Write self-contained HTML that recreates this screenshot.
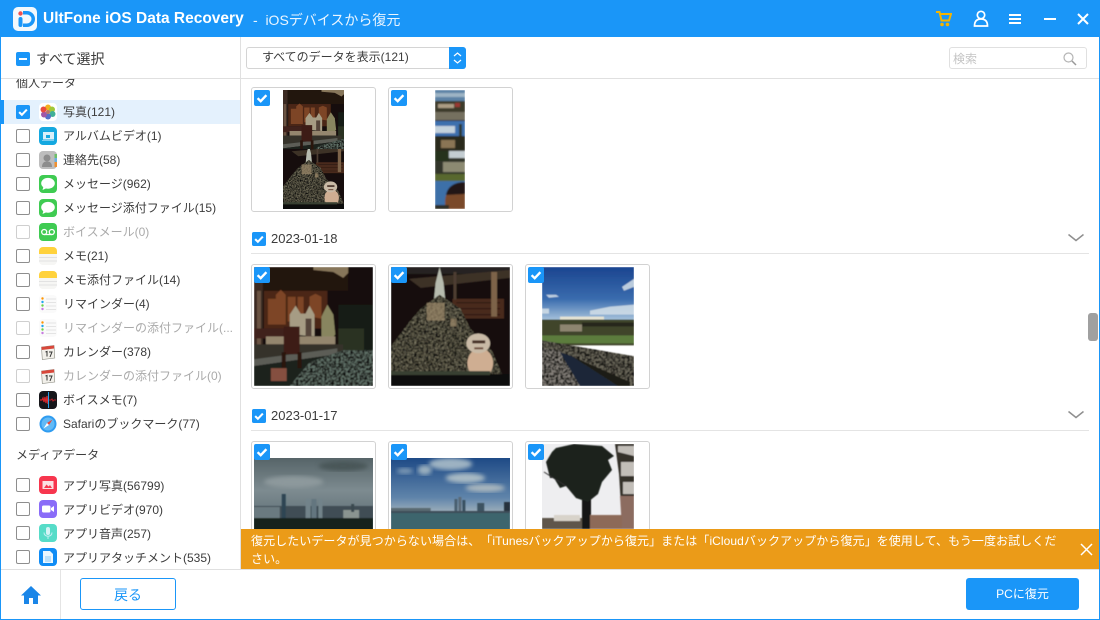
<!DOCTYPE html>
<html><head><meta charset="utf-8"><style>
*{box-sizing:border-box}
html,body{margin:0;padding:0}
body{width:1100px;height:620px;position:relative;overflow:hidden;background:#fff;font-family:"Liberation Sans","Noto Sans CJK JP",sans-serif;color:#3c3c3c;text-spacing-trim:space-all}
.a{position:absolute}
.t{position:absolute;white-space:nowrap;font-size:12px;line-height:20px;height:20px}
.cb{position:absolute;left:16px;width:14px;height:14px;border:1px solid #8e8e8e;border-radius:2px;background:#fff}
.cb.d{border-color:#cfcfcf}
.ic{position:absolute;left:39px;width:18px;height:18px}
.card{position:absolute;width:125px;height:125px;border:1px solid #d2d2d2;border-radius:3px;background:#fff;overflow:hidden}
.card svg.p{position:absolute;left:2px;top:2px}
.ck{position:absolute;left:2px;top:2px;width:16px;height:16px}
.g{color:#aaa}
</style></head><body>
<svg width="0" height="0" style="position:absolute"><defs>
<filter id="b" x="-5%" y="-5%" width="110%" height="110%"><feGaussianBlur stdDeviation=".45"/></filter>
<filter id="b3" x="-5%" y="-5%" width="110%" height="110%"><feGaussianBlur stdDeviation=".8"/></filter>
<filter id="b2" x="-10%" y="-10%" width="120%" height="120%"><feGaussianBlur stdDeviation="2.2"/></filter>
<filter id="n" x="0" y="0" width="100%" height="100%" color-interpolation-filters="sRGB"><feTurbulence type="fractalNoise" baseFrequency=".42" numOctaves="2" seed="4"/><feColorMatrix type="matrix" values="0 0 0 0 .06  0 0 0 0 .06  0 0 0 0 .05  3 0 0 0 -1.1"/><feComposite in2="SourceAlpha" operator="in"/></filter>
<filter id="nl" x="0" y="0" width="100%" height="100%" color-interpolation-filters="sRGB"><feTurbulence type="fractalNoise" baseFrequency=".5" numOctaves="2" seed="9"/><feColorMatrix type="matrix" values="0 0 0 0 .68  0 0 0 0 .66  0 0 0 0 .56  7 0 0 0 -4"/><feComposite in2="SourceAlpha" operator="in"/></filter>
<linearGradient id="sk" x1="0" y1="0" x2="0" y2="1"><stop offset="0" stop-color="#1b4590"/><stop offset=".6" stop-color="#3a6cae"/><stop offset="1" stop-color="#a9c4dc"/></linearGradient>
<linearGradient id="gy" x1="0" y1="0" x2="0" y2="1"><stop offset="0" stop-color="#566468"/><stop offset=".45" stop-color="#7d8b90"/><stop offset="1" stop-color="#55676e"/></linearGradient>
<linearGradient id="bl" x1="0" y1="0" x2="0" y2="1"><stop offset="0" stop-color="#1e4a86"/><stop offset=".55" stop-color="#5f84aa"/><stop offset=".76" stop-color="#9fb0bb"/></linearGradient>
<symbol id="A" viewBox="0 0 120 120" preserveAspectRatio="none"><g filter="url(#b)">
<rect width="120" height="120" fill="#130c09"/>
<rect width="95" height="24" fill="#21120c"/><path d="M60 0H95V6L90 11 80 5 60 3z" fill="#87765a"/>
<rect x="10" y="24" width="64" height="38" fill="#4c2615"/>
<path d="M14 58V32h8v26zM22 58V28l5-5 5 5v30zM34 55V30h8v25zM44 52V30h6v22zM56 50V30l6-3 6 3v22z" fill="#7d4526"/>
<rect x="0" y="0" width="9" height="92" fill="#3a2a22"/><rect x="3" y="24" width="4" height="60" fill="#6a5342"/>
<path d="M36 68V48l6-9 5 8 5 0 4-8 5 9v22z" fill="#a69c84"/><path d="M68 70V50l6-12 6 10 2 20-3 4z" fill="#88855f"/>
<rect x="52" y="52" width="6" height="20" fill="#54443a"/>
<rect x="0" y="62" width="36" height="10" fill="#40201c"/><rect x="12" y="70" width="70" height="8" fill="#94866e"/>
<rect x="85" y="38" width="35" height="48" fill="#121a13"/><rect x="85" y="62" width="26" height="22" fill="#2b3322"/>
<path d="M0 78H90V86L0 96z" fill="#34332c"/><path d="M0 93L84 82V88L0 100z" fill="#5b5d56"/>
<path d="M0 100L84 88V120H0z" fill="#1d211f"/>
<path d="M36 120L56 96 90 84H120V120z" fill="#5f6f66"/><path d="M36 120L56 96 90 84H120V120z" fill="#000" filter="url(#n)"/>
<path d="M30 60h16v28H30z" fill="#3c1c14"/><rect x="28" y="86" width="4" height="16" fill="#2a120d"/><rect x="44" y="86" width="4" height="16" fill="#2a120d"/>
<rect x="17" y="102" width="16" height="13" fill="#85503f"/>
</g></symbol>
<symbol id="B" viewBox="0 0 120 120" preserveAspectRatio="none"><g filter="url(#b)">
<rect width="120" height="120" fill="#130d0a"/>
<rect width="120" height="7" fill="#262321"/><path d="M18 12L120 3V11L30 21z" fill="#3d3128"/>
<rect x="62" y="32" width="52" height="20" fill="#4a2a1c"/><path d="M66 36h44M66 42h44M66 48h44" stroke="#2a170f"/><rect x="101" y="5" width="6" height="45" fill="#7d6448"/><rect x="63" y="5" width="3" height="28" fill="#4e3e32"/>
<path d="M45 16L49 0 53 16 55 36H43z" fill="#b7bbae"/>
<path d="M49 28L70 42 80 62 102 85 112 108H0V80L18 56 30 42z" fill="#5c5846"/>
<path d="M49 28L70 42 80 62 102 85 112 108H0V80L18 56 30 42z" fill="#000" filter="url(#n)"/>
<path d="M49 28L70 42 80 62 102 85 112 108H0V80L18 56 30 42z" fill="#000" filter="url(#nl)" opacity=".45"/>
<path d="M36 36h18v18H36zM60 52h6v8h-6z" fill="#a08c6c" opacity=".7"/>
<ellipse cx="90" cy="97" rx="13" ry="15" fill="#cfae92"/><ellipse cx="88" cy="77" rx="12" ry="10" fill="#c9baa6"/><rect x="82" y="74" width="13" height="3" fill="#463028"/><rect x="84" y="81" width="9" height="2" fill="#6e5040"/>
<rect y="108" width="120" height="12" fill="#0f0c0a"/><rect x="0" y="105" width="100" height="4" fill="#384030"/>
</g></symbol>
<symbol id="C" viewBox="0 0 92 120" preserveAspectRatio="none"><g filter="url(#b)">
<rect width="92" height="54" fill="url(#sk)"/><path d="M80 20l12-8v8l-10 4zM4 28h10l3 2-10 1zM0 42h7v5H0zM48 44l20-4 24-2v10H48z" fill="#d4dfe8" opacity=".85"/><path d="M18 50h44v3H18z" fill="#e6e4d4"/>
<rect y="53" width="92" height="26" fill="#3f452c"/><rect x="18" y="58" width="22" height="7" fill="#8d8570"/><rect x="0" y="69" width="92" height="8" fill="#5b7c3c"/><path d="M40 56H92V60H40z" fill="#26281e"/>
<path d="M0 74L92 90V120H0z" fill="#6b675a"/><path d="M0 74L92 90V120H0z" fill="#000" filter="url(#n)"/>
<path d="M0 82L18 84 38 120H0z" fill="#85807a"/><path d="M0 82L18 84 38 120H0z" fill="#000" filter="url(#n)"/>
<path d="M18 86L30 90 76 120H38z" fill="#1a2738"/><path d="M30 90L88 116V120H76z" fill="#1f1a12"/>
</g></symbol>
<symbol id="D" viewBox="0 0 120 72" preserveAspectRatio="none">
<rect width="120" height="72" fill="url(#gy)"/><ellipse cx="90" cy="8" rx="25" ry="5" fill="#4a5658" filter="url(#b2)"/><ellipse cx="40" cy="24" rx="30" ry="6" fill="#8d999c" filter="url(#b2)"/>
<g filter="url(#b)"><rect y="48" width="120" height="14" fill="#3f4e54"/><rect x="28" y="36" width="4" height="24" fill="#2f4552"/><rect x="52" y="41" width="5" height="20" fill="#72838a"/><rect x="58" y="41" width="5" height="20" fill="#63767f"/><rect x="65" y="41" width="4" height="20" fill="#72838a"/><rect x="0" y="49" width="26" height="12" fill="#6a7a80"/><rect x="90" y="52" width="16" height="9" fill="#8a9490"/><rect x="98" y="46" width="3" height="8" fill="#3b4a50"/>
<rect y="60" width="120" height="12" fill="#16211c"/></g>
</symbol>
<symbol id="E" viewBox="0 0 120 72" preserveAspectRatio="none">
<rect width="120" height="72" fill="url(#bl)"/><ellipse cx="60" cy="6" rx="22" ry="6" fill="#9db2c2" filter="url(#b2)"/><ellipse cx="34" cy="12" rx="7" ry="5" fill="#98aebe" filter="url(#b2)"/><ellipse cx="75" cy="20" rx="20" ry="5" fill="#a8bac4" filter="url(#b2)"/><ellipse cx="95" cy="30" rx="20" ry="4" fill="#a8b6be" filter="url(#b2)"/><ellipse cx="14" cy="13" rx="8" ry="3" fill="#7c98b4" filter="url(#b2)"/>
<g filter="url(#b)"><rect x="64" y="41" width="3" height="14" fill="#4a5f70"/><rect x="68" y="39" width="3" height="16" fill="#5a6b78"/><rect x="72" y="42" width="3" height="13" fill="#384f60"/><rect x="87" y="45" width="7" height="10" fill="#3e5262"/><rect x="114" y="44" width="6" height="11" fill="#26323c"/><rect y="50" width="40" height="5" fill="#5a6a72"/><rect y="53" width="120" height="3" fill="#3e4e58"/><rect y="55" width="120" height="17" fill="#3c656d"/></g>
</symbol>
<symbol id="F" viewBox="0 0 92 85" preserveAspectRatio="none">
<rect width="92" height="85" fill="#eeeef0"/><g filter="url(#b)">
<path d="M73 0H92V62H79L77 30z" fill="#35302b"/><path d="M76 2H92V12L76 8zM79 18H92V32H79zM81 38H92V50H81z" fill="#c2beb8"/><path d="M78 52H92V85H80z" fill="#8c6c60"/>
<rect x="40" y="50" width="9" height="35" fill="#161612"/>
<path d="M4 18L10 8 14 4 32 0 60 2 72 12 66 16 70 26 60 38 56 50 46 58 34 54 24 42 18 44 12 34 8 34z" fill="#1b211c"/>
<path d="M2 28L24 42" stroke="#333" fill="none"/>
<path d="M0 74H40V85H0z" fill="#5e564c"/><path d="M12 71H38V77H12z" fill="#d8d3ca"/><path d="M48 71H80V85H48z" fill="#8d6a58"/>
</g></symbol>
<symbol id="S" viewBox="0 0 30 119" preserveAspectRatio="none"><g filter="url(#b3)">
<rect width="30" height="119" fill="#333"/>
<rect width="30" height="11" fill="#5c82a6"/><rect y="3" width="30" height="4" fill="#9cb4c4"/><rect y="11" width="30" height="19" fill="#3c3a2a"/><rect x="3" y="14" width="16" height="4" fill="#ac9c84"/><rect x="20" y="13" width="5" height="4" fill="#9a3830"/><rect y="22" width="30" height="8" fill="#75705e"/>
<rect y="31" width="30" height="15" fill="#3d70ae"/><rect y="36" width="20" height="7" fill="#c4d2dc"/><rect x="24" y="34" width="3" height="20" fill="#2f3a32"/><rect y="46" width="30" height="15" fill="#2b2a1e"/><rect x="6" y="50" width="14" height="8" fill="#8a7454"/>
<rect y="61" width="30" height="30" fill="#30362a"/><rect x="0" y="61" width="14" height="10" fill="#26301f"/><rect x="14" y="61" width="16" height="7" fill="#c4cdd2"/><rect x="8" y="72" width="22" height="10" fill="#8c8a72"/><rect y="84" width="30" height="7" fill="#59672f"/>
<rect y="91" width="30" height="28" fill="#3d70a8"/><path d="M30 92C18 92 10 100 10 112V119H30z" fill="#7a4a2a"/><path d="M30 92C18 92 12 98 11 105L30 104z" fill="#241612"/><rect y="115" width="14" height="4" fill="#2e2e26"/>
</g></symbol>
<symbol id="ck" viewBox="0 0 16 16"><rect width="16" height="16" rx="2" fill="#1a96f8"/><path d="M3.6 8.2L6.7 11.2 12.4 5.2" fill="none" stroke="#fff" stroke-width="2.4"/></symbol>
<symbol id="note" viewBox="0 0 18 18"><rect width="18" height="18" rx="4" fill="#f6f6f4"/><path d="M0 4a4 4 0 0 1 4-4h10a4 4 0 0 1 4 4v3H0z" fill="#ffd23c"/><path d="M0 10.500h18M0 14h18" stroke="#e2e2e2"/></symbol>
<symbol id="msg" viewBox="0 0 18 18"><rect width="18" height="18" rx="4" fill="#3fcb52"/><ellipse cx="9" cy="8.300" rx="6.800" ry="5.400" fill="#fff"/><path d="M4.500 11.500L3.500 15 8 13z" fill="#fff"/></symbol>
<symbol id="rem" viewBox="0 0 18 18"><rect width="18" height="18" rx="4" fill="#fafafa"/><path d="M7 4h10M7 7.500h10M7 11h10M7 14.500h10" stroke="#e4e4e4"/><circle cx="3.500" cy="3.500" r="1.200" fill="#ff9500"/><circle cx="3.500" cy="7" r="1.200" fill="#20a6f0"/><circle cx="3.500" cy="10.500" r="1.200" fill="#6cd24c"/><circle cx="3.500" cy="14" r="1.200" fill="#c77be0"/></symbol>
<symbol id="cal" viewBox="0 0 18 18"><rect width="18" height="18" rx="3" fill="#fff"/><path d="M2.500 4l12.500-1.500 .8 12.500-12.500 1.500z" fill="#f2f0ea" stroke="#8a8a80" stroke-width=".6"/><path d="M2.500 4l12.500-1.500 .2 3-12.500 1.500z" fill="#d8473a"/><path d="M6.500 9l1.500-.5v5M10 9h3l-2 5" fill="none" stroke="#333" stroke-width="1"/></symbol>
</defs></svg>

<!-- header -->
<div class="a" style="left:0;top:0;width:1100px;height:37px;background:#1a96f8"></div>
<svg class="a" style="left:13px;top:7px" width="24" height="24" viewBox="0 0 24 24"><rect width="24" height="24" rx="5" fill="#f2f8fd"/><path d="M10 4h4a8 8 0 0 1 0 16h-4v-3.500h4a4.500 4.500 0 0 0 0-9h-4z" fill="#1a96f8"/><rect x="5.500" y="10" width="4" height="10" rx="2" fill="#1a96f8"/><circle cx="7.500" cy="6.500" r="2.200" fill="#ee4f4f"/></svg>
<div class="t" style="left:43px;top:9px;color:#fff;font-size:15.500px;font-weight:bold">UltFone iOS Data Recovery</div>
<div class="t" style="left:253px;top:10px;color:#eaf5ff;font-size:14px">-&nbsp; iOSデバイスから復元</div>
<svg class="a" style="left:936px;top:11px" width="16" height="16" viewBox="0 0 16 16"><path d="M0 1h3.500l2 8.500h7.500L15 3H4.200" fill="none" stroke="#f5b400" stroke-width="2"/><circle cx="6" cy="13.500" r="1.800" fill="#f5b400"/><circle cx="11.500" cy="13.500" r="1.800" fill="#f5b400"/></svg>
<svg class="a" style="left:973px;top:10px" width="16" height="17" viewBox="0 0 16 17"><circle cx="8" cy="5" r="3.700" fill="none" stroke="#fff" stroke-width="1.700"/><path d="M1.500 16c0-5 2.500-7 6.500-7s6.500 2 6.500 7z" fill="none" stroke="#fff" stroke-width="1.700"/></svg>
<div class="a" style="left:1009px;top:14px;width:12px;height:2px;background:#fff"></div><div class="a" style="left:1009px;top:18px;width:12px;height:2px;background:#fff"></div><div class="a" style="left:1009px;top:22px;width:12px;height:2px;background:#fff"></div>
<div class="a" style="left:1044px;top:18px;width:12px;height:2px;background:#fff"></div>
<svg class="a" style="left:1077px;top:13px" width="12" height="12" viewBox="0 0 12 12"><path d="M1 1l10 10M11 1L1 11" stroke="#fff" stroke-width="2"/></svg>

<!-- toolbar -->
<div class="a" style="left:0;top:78px;width:1100px;height:1px;background:#e0e0e0"></div>
<div class="a" style="left:240px;top:37px;width:1px;height:533px;background:#e0e0e0"></div>
<div class="a" style="left:16px;top:52px;width:14px;height:14px;border-radius:2px;background:#1a96f8"></div><div class="a" style="left:19px;top:58px;width:8px;height:2px;background:#fff"></div>
<div class="t" style="left:36px;top:49px;font-size:14px">すべて選択</div>
<div class="a" style="left:246px;top:47px;width:220px;height:22px;border:1px solid #d4d4d4;border-radius:3px"></div>
<div class="t" style="left:262px;top:47px;font-size:12px;line-height:21px">すべてのデータを表示(121)</div>
<div class="a" style="left:449px;top:47px;width:17px;height:22px;background:#1a96f8;border-radius:0 3px 3px 0"></div>
<svg class="a" style="left:453px;top:51px" width="9" height="14" viewBox="0 0 9 14"><path d="M1 5l3.500-3L8 5M1 9l3.500 3L8 9" fill="none" stroke="#fff" stroke-width="1.200"/></svg>
<div class="a" style="left:949px;top:47px;width:138px;height:22px;border:1px solid #e0e0e0;border-radius:3px"></div>
<div class="t" style="left:953px;top:49px;color:#c4c4c4">検索</div>
<svg class="a" style="left:1063px;top:52px" width="14" height="14" viewBox="0 0 14 14"><circle cx="5.500" cy="5.500" r="4.500" fill="none" stroke="#b4b4b4" stroke-width="1.200"/><path d="M9 9l4 4" stroke="#999" stroke-width="1.500"/></svg>

<!-- sidebar list -->
<div class="a" style="left:0;top:79px;width:240px;height:490px;overflow:hidden">
<div class="t" style="left:16px;top:-6px">個人データ</div>
<div class="a" style="left:0;top:21px;width:240px;height:24px;background:#e4f1fd"></div>
<div class="a" style="left:0;top:21px;width:4px;height:24px;background:#1a96f8"></div>
</div>
<svg class="a" style="left:16px;top:105px" width="14" height="14"><use href="#ck" width="14" height="14"/></svg>
<div class="cb" style="top:129px"></div><div class="cb" style="top:153px"></div><div class="cb" style="top:177px"></div><div class="cb" style="top:201px"></div><div class="cb d" style="top:225px"></div><div class="cb" style="top:249px"></div><div class="cb" style="top:273px"></div><div class="cb" style="top:297px"></div><div class="cb d" style="top:321px"></div><div class="cb" style="top:345px"></div><div class="cb d" style="top:369px"></div><div class="cb" style="top:393px"></div><div class="cb" style="top:417px"></div>
<div class="cb" style="top:478px"></div><div class="cb" style="top:502px"></div><div class="cb" style="top:526px"></div><div class="cb" style="top:550px"></div>

<svg class="ic" style="top:103px" viewBox="0 0 18 18"><rect width="18" height="18" rx="4" fill="#fff"/><circle cx="9" cy="4.500" r="3" fill="#f2b020"/><circle cx="13" cy="6.500" r="3" fill="#a0c838"/><circle cx="13.500" cy="11" r="3" fill="#40b098"/><circle cx="9" cy="13.500" r="3" fill="#5470c8"/><circle cx="5" cy="11.500" r="3" fill="#a058a8"/><circle cx="4.500" cy="6.500" r="3" fill="#e84c40"/><circle cx="9" cy="9" r="2" fill="#b87868"/></svg>
<svg class="ic" style="top:127px" viewBox="0 0 18 18"><rect width="18" height="18" rx="4" fill="#14a8e0"/><rect x="4" y="5" width="11" height="7.500" fill="#d8f0fa"/><rect x="7" y="8" width="4" height="3" fill="#14a8e0"/><rect x="3" y="13" width="12" height="1" fill="#7ecdf0"/></svg>
<svg class="ic" style="top:151px" viewBox="0 0 18 18"><rect width="18" height="18" rx="4" fill="#bdbdbd"/><circle cx="8" cy="7" r="3.500" fill="#8d8d8d"/><path d="M3 16c0-4 2-5.500 5-5.500s5 1.500 5 5.500z" fill="#8d8d8d"/><rect x="15.500" y="3" width="2.500" height="4" fill="#6dbf6a"/><rect x="15.500" y="7" width="2.500" height="4" fill="#6ab0e0"/><rect x="15.500" y="11" width="2.500" height="5" fill="#f09030"/></svg>
<svg class="ic" style="top:175px"><use href="#msg"/></svg>
<svg class="ic" style="top:199px"><use href="#msg"/></svg>
<svg class="ic" style="top:223px" viewBox="0 0 18 18"><rect width="18" height="18" rx="4" fill="#3fcb52"/><circle cx="5.200" cy="9" r="2.500" fill="none" stroke="#fff" stroke-width="1.300"/><circle cx="12.800" cy="9" r="2.500" fill="none" stroke="#fff" stroke-width="1.300"/><path d="M5 11.500h8" stroke="#fff" stroke-width="1.300"/></svg>
<svg class="ic" style="top:247px"><use href="#note"/></svg>
<svg class="ic" style="top:271px"><use href="#note"/></svg>
<svg class="ic" style="top:295px"><use href="#rem"/></svg>
<svg class="ic" style="top:319px"><use href="#rem"/></svg>
<svg class="ic" style="top:343px"><use href="#cal"/></svg>
<svg class="ic" style="top:367px"><use href="#cal"/></svg>
<svg class="ic" style="top:391px" viewBox="0 0 18 18"><rect width="18" height="18" rx="4" fill="#16161a"/><path d="M1 9h2l1-2 1 4 1-5 1 6 1-7 1 8" fill="none" stroke="#d8282c" stroke-width="1.200"/><path d="M10 9h2l1-1 1 2 1-1h2" fill="none" stroke="#b02028"/><path d="M9.500 1v16" stroke="#2aa0e8" stroke-width="1"/></svg>
<svg class="ic" style="top:415px" viewBox="0 0 18 18"><circle cx="9" cy="9" r="8.500" fill="#2f9cf0"/><circle cx="9" cy="9" r="6.500" fill="#62baf6"/><path d="M13.500 4.500L10 10 8 8z" fill="#e8483c"/><path d="M4.500 13.500L8 8l2 2z" fill="#fff"/></svg>
<svg class="ic" style="top:476px" viewBox="0 0 18 18"><rect width="18" height="18" rx="4" fill="#f7364e"/><rect x="3.500" y="5" width="11" height="8" fill="#fbdfe2"/><path d="M5 12l2.500-3.500 2 2 1.500-1.500 2 3z" fill="#f7364e"/></svg>
<svg class="ic" style="top:500px" viewBox="0 0 18 18"><rect width="18" height="18" rx="4" fill="#8a6cf8"/><rect x="3" y="5.500" width="8.500" height="7" rx="1.500" fill="#fff"/><path d="M12 8l3-2v6l-3-2z" fill="#fff"/></svg>
<svg class="ic" style="top:524px" viewBox="0 0 18 18"><rect width="18" height="18" rx="4" fill="#56dcc8"/><rect x="7" y="3" width="4" height="8" rx="2" fill="#d4f4f6"/><path d="M5 8.500c0 5 8 5 8 0M9 12.500V15" fill="none" stroke="#c4eef2" stroke-width="1"/></svg>
<svg class="ic" style="top:548px" viewBox="0 0 18 18"><rect width="18" height="18" rx="4" fill="#0f8cf5"/><path d="M4 3h7l3 3v9H4z" fill="#eaf6fe"/><path d="M6 9h6M6 11h6M6 13h6" stroke="#8ccaf6"/></svg>

<div class="t" style="left:63px;top:102px">写真(121)</div>
<div class="t" style="left:63px;top:126px">アルバムビデオ(1)</div>
<div class="t" style="left:63px;top:150px">連絡先(58)</div>
<div class="t" style="left:63px;top:174px">メッセージ(962)</div>
<div class="t" style="left:63px;top:198px">メッセージ添付ファイル(15)</div>
<div class="t g" style="left:63px;top:222px">ボイスメール(0)</div>
<div class="t" style="left:63px;top:246px">メモ(21)</div>
<div class="t" style="left:63px;top:270px">メモ添付ファイル(14)</div>
<div class="t" style="left:63px;top:294px">リマインダー(4)</div>
<div class="t g" style="left:63px;top:318px">リマインダーの添付ファイル(...</div>
<div class="t" style="left:63px;top:342px">カレンダー(378)</div>
<div class="t g" style="left:63px;top:366px">カレンダーの添付ファイル(0)</div>
<div class="t" style="left:63px;top:390px">ボイスメモ(7)</div>
<div class="t" style="left:63px;top:414px">Safariのブックマーク(77)</div>
<div class="t" style="left:16px;top:445px">メディアデータ</div>
<div class="t" style="left:63px;top:476px">アプリ写真(56799)</div>
<div class="t" style="left:63px;top:500px">アプリビデオ(970)</div>
<div class="t" style="left:63px;top:524px">アプリ音声(257)</div>
<div class="t" style="left:63px;top:548px">アプリアタッチメント(535)</div>

<!-- content -->
<div class="card" style="left:251px;top:87px"><svg class="p" style="left:31px" width="61" height="119" viewBox="0 0 61 119"><svg width="61" height="59" viewBox="0 0 84 84" preserveAspectRatio="none"><use href="#A" x="-2" y="0" width="110" height="100"/></svg><svg y="59" width="61" height="60" viewBox="0 0 84 84" preserveAspectRatio="none"><use href="#B" x="-2" y="-6" width="92" height="92"/></svg></svg><svg class="ck"><use href="#ck"/></svg></div>
<div class="card" style="left:388px;top:87px"><svg class="p" style="left:46px" width="30" height="119"><use href="#S" width="30" height="119"/></svg><svg class="ck"><use href="#ck"/></svg></div>

<svg class="a" style="left:252px;top:232px" width="14" height="14"><use href="#ck" width="14" height="14"/></svg>
<div class="t" style="left:271px;top:229px;font-size:13px">2023-01-18</div>
<svg class="a" style="left:1068px;top:233px" width="16" height="10" viewBox="0 0 16 10"><path d="M.5 1.500L8 7.500l7.500-6" fill="none" stroke="#8f8f8f" stroke-width="1.500"/></svg>
<div class="a" style="left:251px;top:253px;width:838px;height:1px;background:#e4e4e4"></div>
<div class="card" style="left:251px;top:264px"><svg class="p" width="119" height="119"><use href="#A" width="119" height="119"/></svg><svg class="ck"><use href="#ck"/></svg></div>
<div class="card" style="left:388px;top:264px"><svg class="p" width="119" height="119"><use href="#B" width="119" height="119"/></svg><svg class="ck"><use href="#ck"/></svg></div>
<div class="card" style="left:525px;top:264px"><svg class="p" style="left:16px" width="92" height="119"><use href="#C" width="92" height="119"/></svg><svg class="ck"><use href="#ck"/></svg></div>

<svg class="a" style="left:252px;top:409px" width="14" height="14"><use href="#ck" width="14" height="14"/></svg>
<div class="t" style="left:271px;top:406px;font-size:13px">2023-01-17</div>
<svg class="a" style="left:1068px;top:410px" width="16" height="10" viewBox="0 0 16 10"><path d="M.5 1.500L8 7.500l7.500-6" fill="none" stroke="#8f8f8f" stroke-width="1.500"/></svg>
<div class="a" style="left:251px;top:430px;width:838px;height:1px;background:#e4e4e4"></div>
<div class="card" style="left:251px;top:441px"><svg class="p" style="top:16px" width="119" height="72"><use href="#D" width="119" height="72"/></svg><svg class="ck"><use href="#ck"/></svg></div>
<div class="card" style="left:388px;top:441px"><svg class="p" style="top:16px" width="119" height="72"><use href="#E" width="119" height="72"/></svg><svg class="ck"><use href="#ck"/></svg></div>
<div class="card" style="left:525px;top:441px"><svg class="p" style="left:16px" width="92" height="85"><use href="#F" width="92" height="85"/></svg><svg class="ck"><use href="#ck"/></svg></div>

<div class="a" style="left:1088px;top:313px;width:10px;height:28px;border-radius:3px;background:#a0a0a0"></div>

<!-- notice -->
<div class="a" style="left:241px;top:529px;width:859px;height:40px;background:#eb9b18"></div>
<div class="a" style="left:251px;top:532px;width:830px;color:#fff;font-size:12px;line-height:18px;white-space:nowrap;letter-spacing:.07px">復元したいデータが見つからない場合は、「iTunesバックアップから復元」または「iCloudバックアップから復元」を使用して、もう一度お試しくだ<br>さい。</div>
<svg class="a" style="left:1080px;top:543px" width="13" height="13" viewBox="0 0 13 13"><path d="M1 1l11 11M12 1L1 12" stroke="#fff" stroke-width="1.500"/></svg>

<!-- footer -->
<div class="a" style="left:0;top:569px;width:1100px;height:1px;background:#e0e0e0"></div>
<div class="a" style="left:60px;top:570px;width:1px;height:49px;background:#e4e4e4"></div>
<svg class="a" style="left:21px;top:586px" width="20" height="18" viewBox="0 0 20 18"><path d="M10 0L0 9.500h3V18h5v-6h4v6h5V9.500h3z" fill="#1a86e8"/></svg>
<div class="a" style="left:80px;top:578px;width:96px;height:32px;border:1px solid #1a96f8;border-radius:3px;color:#1a96f8;font-size:14px;line-height:32px;text-align:center">戻る</div>
<div class="a" style="left:966px;top:578px;width:113px;height:32px;background:#1a96f8;border-radius:3px;color:#fff;font-size:12px;line-height:33px;text-align:center">PCに復元</div>

<!-- window border -->
<div class="a" style="left:0;top:37px;width:1px;height:583px;background:#1a96f8"></div>
<div class="a" style="left:1099px;top:37px;width:1px;height:583px;background:#1a96f8"></div>
<div class="a" style="left:0;top:619px;width:1100px;height:1px;background:#1a96f8"></div>
</body></html>
